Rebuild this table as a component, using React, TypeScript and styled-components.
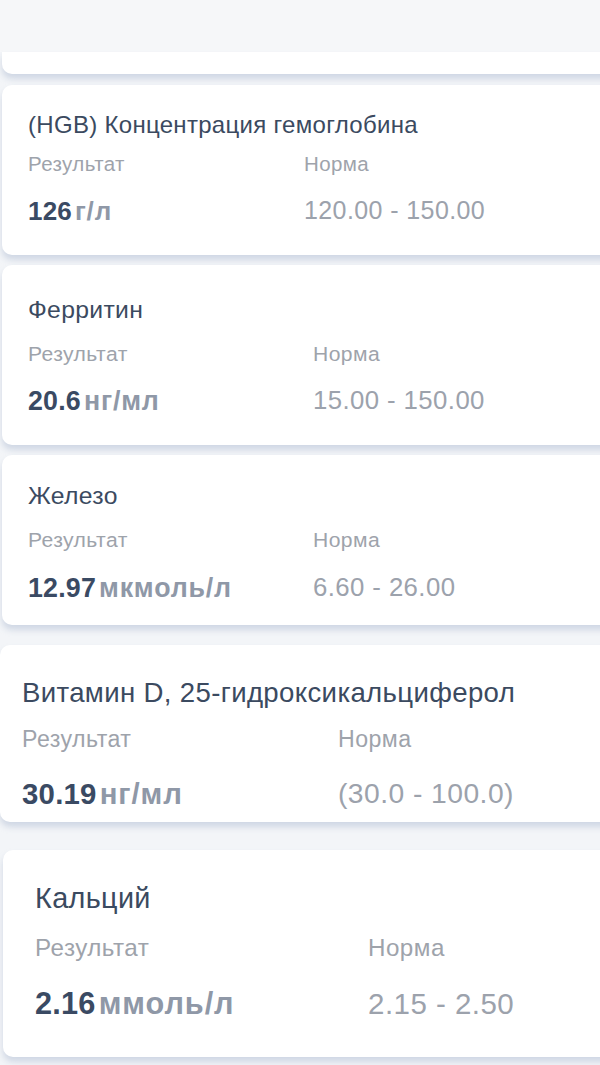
import React from "react";
import styled, { createGlobalStyle } from "styled-components";

const Global = createGlobalStyle`
  html, body { margin: 0; padding: 0; background: #ffffff; }
  body { font-family: "Liberation Sans", Arial, sans-serif; -webkit-font-smoothing: antialiased; }
  #root { width: 600px; height: 1065px; overflow: hidden; }
`;

const Page = styled.div`
  width: 600px;
  height: 1065px;
  overflow: hidden;
  background: #f3f5f8;
  display: flex;
  flex-direction: column;
`;

const Header = styled.div`
  height: 52px;
  flex: none;
  background: #f6f7f9;
`;

const Stub = styled.div`
  height: 22px;
  flex: none;
  margin-left: 2px;
  margin-right: -20px;
  background: #ffffff;
  border-radius: 0 0 10px 10px;
  box-shadow: 0 5px 6px rgba(196, 205, 222, 0.75);
`;

type CardProps = {
  $top: number;
  $left: number;
  $height: number;
  $pad: number;
};

const Card = styled.div<CardProps>`
  flex: none;
  box-sizing: border-box;
  margin-top: ${(p) => p.$top}px;
  margin-left: ${(p) => p.$left}px;
  margin-right: -20px;
  height: ${(p) => p.$height}px;
  padding-left: ${(p) => p.$pad}px;
  background: #ffffff;
  border-radius: 10px;
  box-shadow: 0 5px 6px rgba(196, 205, 222, 0.75);
  display: flex;
  flex-direction: column;
`;

type ScaleProps = { $s: number; $mt: number };

const Title = styled.div<ScaleProps>`
  margin-top: ${(p) => p.$mt}px;
  font-size: ${(p) => 24 * p.$s}px;
  letter-spacing: ${(p) => 0.3 * p.$s}px;
  line-height: 1;
  color: #3b4a60;
  white-space: nowrap;
`;

const Grid = styled.div<{ $col: number }>`
  display: grid;
  grid-template-columns: ${(p) => p.$col}px auto;
`;

const Label = styled.div<ScaleProps>`
  margin-top: ${(p) => p.$mt}px;
  font-size: ${(p) => 20.5 * p.$s}px;
  letter-spacing: ${(p) => 0.4 * p.$s}px;
  line-height: 1;
  color: #9ea3ab;
  white-space: nowrap;
`;

const Value = styled.div<ScaleProps>`
  margin-top: ${(p) => p.$mt}px;
  font-size: ${(p) => 26 * p.$s}px;
  letter-spacing: ${(p) => 0.2 * p.$s}px;
  line-height: 1;
  font-weight: 700;
  color: #3a4a63;
  white-space: nowrap;
`;

const Unit = styled.span<{ $s: number }>`
  color: #8f98a7;
  margin-left: 3px;
  letter-spacing: ${(p) => 0.8 * p.$s}px;
`;

const Norm = styled.div<ScaleProps>`
  margin-top: ${(p) => p.$mt}px;
  font-size: ${(p) => 25 * p.$s}px;
  letter-spacing: ${(p) => 0.4 * p.$s}px;
  line-height: 1;
  color: #9ca2ac;
  white-space: nowrap;
`;

type Item = {
  title: string;
  value: string;
  unit: string;
  norm: string;
  top: number;
  left: number;
  height: number;
  pad: number;
  col: number;
  s: number;
  ts: number;
  t: number;
  l: number;
  v: number;
};

const items: Item[] = [
  { title: "(HGB) Концентрация гемоглобина", value: "126", unit: "г/л", norm: "120.00 - 150.00", top: 11, left: 2, height: 170, pad: 26, col: 276, s: 1, ts: 1, t: 28, l: 17, v: 23 },
  { title: "Ферритин", value: "20.6", unit: "нг/мл", norm: "15.00 - 150.00", top: 10, left: 2, height: 180, pad: 26, col: 285, s: 1.03, ts: 1.03, t: 33, l: 20, v: 24 },
  { title: "Железо", value: "12.97", unit: "мкмоль/л", norm: "6.60 - 26.00", top: 10, left: 2, height: 170, pad: 26, col: 285, s: 1.03, ts: 1.03, t: 29, l: 20, v: 25 },
  { title: "Витамин D, 25-гидроксикальциферол", value: "30.19", unit: "нг/мл", norm: "(30.0 - 100.0)", top: 20, left: 0, height: 177, pad: 22, col: 316, s: 1.13, ts: 1.15, t: 34, l: 21, v: 28 },
  { title: "Кальций", value: "2.16", unit: "ммоль/л", norm: "2.15 - 2.50", top: 28, left: 3, height: 207, pad: 32, col: 333, s: 1.18, ts: 1.2, t: 34, l: 23, v: 29 },
];

export default function App() {
  return (
    <>
      <Global />
      <Page>
        <Header />
        <Stub />
        {items.map((it) => (
          <Card key={it.title} $top={it.top} $left={it.left} $height={it.height} $pad={it.pad}>
            <Title $s={it.ts} $mt={it.t}>{it.title}</Title>
            <Grid $col={it.col}>
              <Label $s={it.s} $mt={it.l}>Результат</Label>
              <Label $s={it.s} $mt={it.l}>Норма</Label>
              <Value $s={it.s} $mt={it.v}>
                {it.value}
                <Unit $s={it.s}>{it.unit}</Unit>
              </Value>
              <Norm $s={it.s} $mt={it.v}>{it.norm}</Norm>
            </Grid>
          </Card>
        ))}
      </Page>
    </>
  );
}
